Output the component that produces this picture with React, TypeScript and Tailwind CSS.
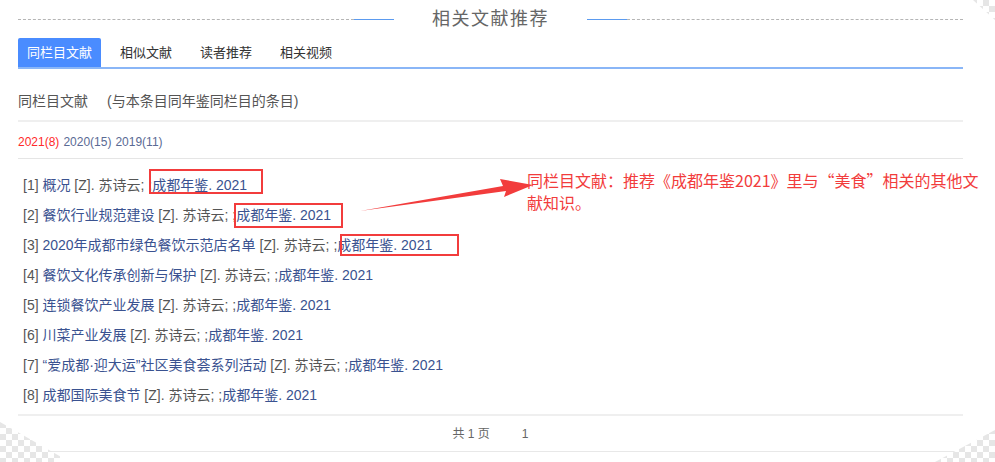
const items = [
  "概况",
  "餐饮行业规范建设",
  "2020年成都市绿色餐饮示范店名单",
  "餐饮文化传承创新与保护",
  "连锁餐饮产业发展",
  "川菜产业发展",
  "“爱成都·迎大运”社区美食荟系列活动",
  "成都国际美食节",
];

const tabs = ["同栏目文献", "相似文献", "读者推荐", "相关视频"];

function Checker({ className }: { className: string }) {
  return (
    <svg className={className} width="60" height="40" viewBox="0 0 60 40">
      <defs>
        <pattern id="ck" width="12" height="12" patternUnits="userSpaceOnUse">
          <rect width="12" height="12" fill="#fff" />
          <rect width="6" height="6" fill="#e6e6e6" />
          <rect x="6" y="6" width="6" height="6" fill="#e6e6e6" />
        </pattern>
      </defs>
      <rect width="60" height="40" fill="url(#ck)" />
    </svg>
  );
}

export default function App() {
  return (
    <div
      className="relative h-[462px] w-[995px] overflow-hidden bg-white"
      style={{ fontFamily: '"Liberation Sans", "Noto Sans CJK SC", sans-serif' }}
    >
      {/* torn corners */}
      <div className="absolute right-0 top-0 h-[20px] w-[22px] overflow-hidden [clip-path:polygon(0_0,100%_0,100%_100%)]">
        <Checker className="absolute right-0 top-0" />
      </div>
      <div className="absolute bottom-0 left-0 h-[40px] w-[70px] overflow-hidden [clip-path:polygon(0_0,100%_100%,0_100%)]">
        <Checker className="absolute bottom-0 left-0" />
      </div>
      <div className="absolute bottom-0 right-0 h-[32px] w-[60px] overflow-hidden [clip-path:polygon(100%_0,100%_100%,0_100%)]">
        <Checker className="absolute bottom-0 right-0" />
      </div>

      <div className="ml-[18px] w-[945px]">
        {/* title */}
        <div className="flex h-[38px] items-center">
          <div className="flex flex-1 items-center">
            <div className="flex-1 border-t border-dashed border-[#b5b5b5]" />
            <div className="h-px w-[40px] bg-[#5b9bf0]" />
          </div>
          <div className="px-[38px] text-[18px] tracking-[1.5px] text-[#666]">相关文献推荐</div>
          <div className="flex flex-1 items-center">
            <div className="h-px w-[40px] bg-[#5b9bf0]" />
            <div className="flex-1 border-t border-dashed border-[#b5b5b5]" />
          </div>
        </div>

        {/* tabs */}
        <div className="flex h-[31px] items-stretch border-b-2 border-[#8ab6f7]">
          {tabs.map((t, i) => (
            <div
              key={t}
              className={
                i === 0
                  ? "mr-[19px] flex w-[83px] items-center justify-center rounded-t-[2px] bg-[#4a8cff] text-[13px] text-white"
                  : "flex w-[80px] items-center text-[13px] text-[#333]"
              }
            >
              {t}
            </div>
          ))}
        </div>

        {/* section heading */}
        <div className="flex h-[53px] items-center border-b-2 border-[#efefef] pt-[13px] text-[14px] text-[#555]">
          <span>同栏目文献</span>
          <span className="ml-[19px]">(与本条目同年鉴同栏目的条目)</span>
        </div>

        <div className="flex h-[37px] items-center border-b border-[#e5e5e5] pt-[4px] text-[12px] text-[#5a6a94]">
          <span className="text-[#ff2a2a]">2021(8)</span>
          <span className="ml-[4px]">2020(15)</span>
          <span className="ml-[4px]">2019(11)</span>
        </div>

        {/* list */}
        <div className="relative border-b-2 border-[#efefef] pb-[4px] pl-[5px] pt-[11px]">
          {items.map((title, i) => (
            <div key={i} className="h-[30px] text-[14px] leading-[30px] text-[#555]">
              [{i + 1}] <span className="text-[#3a5290]">{title}</span> [Z]. 苏诗云; ;
              <span className="text-[#3a5290]">成都年鉴. 2021</span>
            </div>
          ))}

          {/* highlight boxes */}
          <div className="absolute left-[131px] top-[10px] h-[25px] w-[114px] border-2 border-[#f23c3c]" />
          <div className="absolute left-[216px] top-[44px] h-[25px] w-[109px] border-2 border-[#f23c3c]" />
          <div className="absolute left-[322px] top-[75px] h-[22px] w-[119px] border-2 border-[#f23c3c]" />

          {/* arrow */}
          <svg className="absolute left-[338px] top-[14px]" width="185" height="42" viewBox="0 0 185 42">
            <polygon points="4,38 150,18 148,24 177,12 144,6 147,13" fill="#f23c3c" />
          </svg>

          {/* annotation */}
          <div
            className="absolute left-[509px] top-[10px] w-[462px] text-[16px] leading-[22px] text-[#f23c3c]"
            style={{ fontFamily: '"Noto Sans CJK SC", "Liberation Sans", sans-serif' }}
          >
            同栏目文献：推荐《成都年鉴2021》里与“美食”相关的其他文献知识。
          </div>
        </div>

        {/* pager */}
        <div className="flex h-[36px] items-center justify-center border-b border-[#e8e8e8] text-[12px] text-[#666]">
          <span>共 1 页</span>
          <span className="ml-[32px]">1</span>
        </div>
      </div>
    </div>
  );
}
